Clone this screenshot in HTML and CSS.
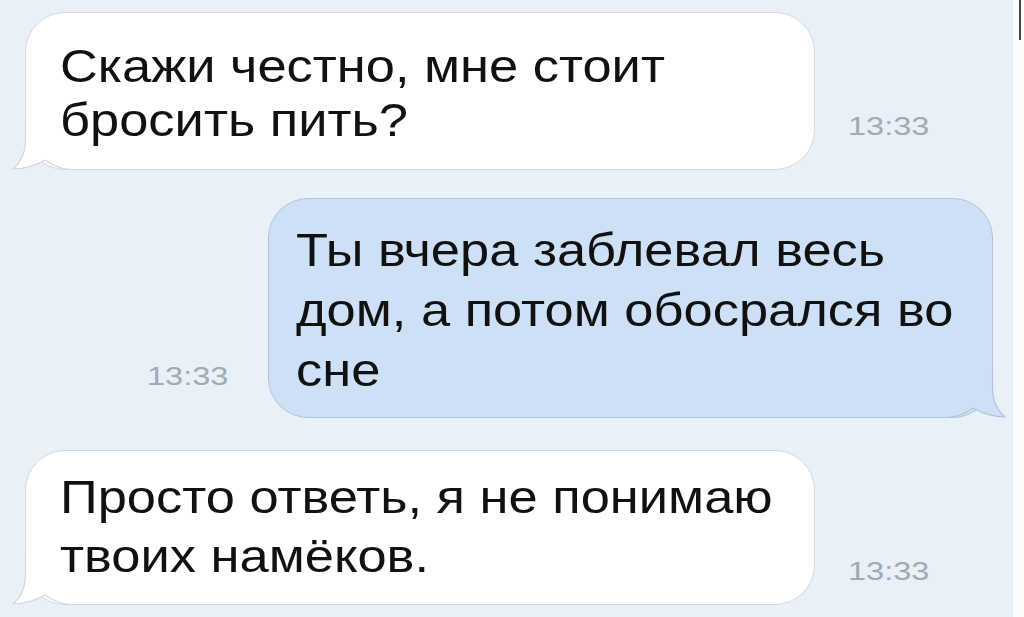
FILE: index.html
```html
<!DOCTYPE html>
<html lang="ru">
<head>
  <meta charset="UTF-8">
  <title>Переписка</title>
  <link rel="stylesheet" href="styles.css">
</head>
<body>
  <div class="page">
    <div class="chat">
      <div class="row in">
        <div class="bubble white b1">
          <svg class="tail" width="70" height="50" viewBox="0 0 70 50">
            <path class="tail-fill" d="M13.5 0 L13.5 20 C13.5 34 9 42 1 49 C12 49 25 45 33 40 C40 45 48 49.5 60 49.5 L70 49.5 L70 0 Z"/>
            <path class="tail-line" d="M13.5 0 L13.5 20 C13.5 34 9 42 1 49 C12 49 25 45 33 40 C40 45 48 49.5 60 49.5 L70 49.5"/>
          </svg>
          <span class="txt">Скажи честно, мне стоит<br>бросить пить?</span>
        </div>
        <span class="time t1"><span class="tw">13:33</span></span>
      </div>

      <div class="row out">
        <span class="time t2"><span class="tw">13:33</span></span>
        <div class="bubble blue">
          <svg class="tail" width="70" height="50" viewBox="0 0 70 50">
            <path class="tail-fill" d="M13.5 0 L13.5 20 C13.5 34 9 42 1 49 C12 49 25 45 33 40 C40 45 48 49.5 60 49.5 L70 49.5 L70 0 Z"/>
            <path class="tail-line" d="M13.5 0 L13.5 20 C13.5 34 9 42 1 49 C12 49 25 45 33 40 C40 45 48 49.5 60 49.5 L70 49.5"/>
          </svg>
          <span class="txt">Ты вчера заблевал весь<br>дом, а потом обосрался во<br>сне</span>
        </div>
      </div>

      <div class="row in">
        <div class="bubble white b3">
          <svg class="tail" width="70" height="50" viewBox="0 0 70 50">
            <path class="tail-fill" d="M13.5 0 L13.5 20 C13.5 34 9 42 1 49 C12 49 25 45 33 40 C40 45 48 49.5 60 49.5 L70 49.5 L70 0 Z"/>
            <path class="tail-line" d="M13.5 0 L13.5 20 C13.5 34 9 42 1 49 C12 49 25 45 33 40 C40 45 48 49.5 60 49.5 L70 49.5"/>
          </svg>
          <span class="txt">Просто ответь, я не понимаю<br>твоих намёков.</span>
        </div>
        <span class="time t3"><span class="tw">13:33</span></span>
      </div>
    </div>
    <div class="edge"><span class="edge-line"></span></div>
  </div>
</body>
</html>
```

FILE: styles.css
```css
html, body { margin: 0; height: 100%; }
body {
  font-family: "Liberation Sans", Arial, sans-serif;
  background: #e9f0f8;
  color: #111;
  overflow: hidden;
}
.page { display: flex; height: 617px; }
.chat { width: 1013px; padding-top: 12px; }
.edge { flex: 1; background: #fafcfe; position: relative; }
.edge-line {
  position: absolute;
  left: 6px;
  top: 0;
  width: 2px;
  height: 40px;
  background: #444;
}

.row { display: flex; align-items: flex-end; }
.row.in { padding-left: 25px; }
.row.out { padding-left: 147px; margin: 28px 0 32px; }

.bubble {
  position: relative;
  font-size: 46px;
  border-radius: 40px;
  box-sizing: border-box;
}
.txt {
  position: relative;
  z-index: 1;
  display: inline-block;
  transform: scaleX(1.14);
  transform-origin: 0 0;
  white-space: nowrap;
}
.bubble.white {
  width: 790px;
  background: #fff;
  border: 1px solid #d3d8df;
  --tail-fill: #fff;
  --tail-line: #d3d8df;
}
.b1 { height: 158px; padding: 26px 34px 0; line-height: 54px; }
.b3 { height: 155px; padding: 17px 34px 0; line-height: 59px; }
.bubble.blue {
  width: 725px;
  height: 220px;
  padding: 21px 27px 0;
  line-height: 60px;
  background: #cde0f6;
  border: 1px solid #b3c4da;
  --tail-fill: #cde0f6;
  --tail-line: #b3c4da;
}

.tail {
  position: absolute;
  left: -14px;
  bottom: -1px;
  overflow: visible;
}
.bubble.blue .tail {
  left: auto;
  right: -14px;
  transform: scaleX(-1);
}
.tail-fill { fill: var(--tail-fill); }
.tail-line { fill: none; stroke: var(--tail-line); stroke-width: 1.2; }

.time {
  font-size: 25px;
  line-height: 25px;
  color: #a2aab5;
}
.tw {
  display: inline-block;
  transform: scaleX(1.3);
  transform-origin: 0 0;
}
.t1 { margin-left: 33px; padding-bottom: 31px; }
.t2 { width: 121px; padding-bottom: 29px; }
.t3 { margin-left: 33px; padding-bottom: 21px; }
```
